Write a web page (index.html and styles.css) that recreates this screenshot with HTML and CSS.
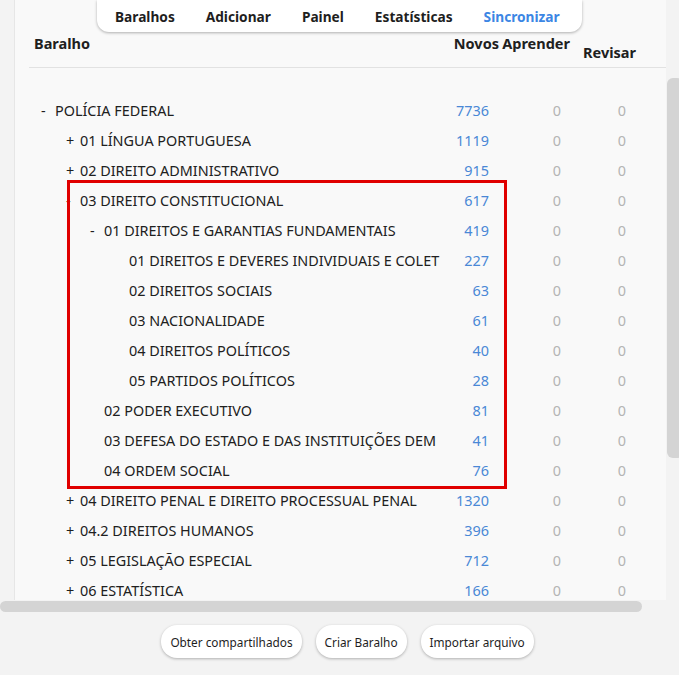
FILE: index.html
```html
<!doctype html>
<html lang="pt-BR">
  <head>
    <meta charset="UTF-8" />
    <meta name="viewport" content="width=device-width, initial-scale=1" />
    <link rel="stylesheet" href="styles.css">
  </head>
  <body class="l-page">
    <nav class="top-nav">
      <a class="top-nav__item">Baralhos</a>
      <a class="top-nav__item">Adicionar</a>
      <a class="top-nav__item">Painel</a>
      <a class="top-nav__item">Estatísticas</a>
      <a class="top-nav__item top-nav__item--sync">Sincronizar</a>
    </nav>

    <main class="deck-panel">
      <div class="deck-head">
        <div class="deck-head__name">Baralho</div>
        <div class="deck-head__col deck-head__col--new">Novos</div>
        <div class="deck-head__col deck-head__col--learn">Aprender</div>
        <div class="deck-head__col deck-head__col--due"><div class="deck-head__wrap">Para Revisar</div></div>
      </div>

      <div class="deck-list">
        <div class="deck-row">
          <div class="deck-row__name lvl-0"><span class="toggle">-</span>POLÍCIA FEDERAL</div>
          <div class="deck-row__new">7736</div><div class="deck-row__zero">0</div><div class="deck-row__zero deck-row__zero--due">0</div>
        </div>
        <div class="deck-row">
          <div class="deck-row__name lvl-1"><span class="toggle">+</span>01 LÍNGUA PORTUGUESA</div>
          <div class="deck-row__new">1119</div><div class="deck-row__zero">0</div><div class="deck-row__zero deck-row__zero--due">0</div>
        </div>
        <div class="deck-row">
          <div class="deck-row__name lvl-1"><span class="toggle">+</span>02 DIREITO ADMINISTRATIVO</div>
          <div class="deck-row__new">915</div><div class="deck-row__zero">0</div><div class="deck-row__zero deck-row__zero--due">0</div>
        </div>

        <div class="deck-group deck-group--marked">
          <div class="deck-row">
            <div class="deck-row__name lvl-1"><span class="toggle">-</span>03 DIREITO CONSTITUCIONAL</div>
            <div class="deck-row__new">617</div><div class="deck-row__zero">0</div><div class="deck-row__zero deck-row__zero--due">0</div>
          </div>
          <div class="deck-row">
            <div class="deck-row__name lvl-2"><span class="toggle">-</span>01 DIREITOS E GARANTIAS FUNDAMENTAIS</div>
            <div class="deck-row__new">419</div><div class="deck-row__zero">0</div><div class="deck-row__zero deck-row__zero--due">0</div>
          </div>
          <div class="deck-row">
            <div class="deck-row__name lvl-3"><span class="toggle"></span>01 DIREITOS E DEVERES INDIVIDUAIS E COLET</div>
            <div class="deck-row__new">227</div><div class="deck-row__zero">0</div><div class="deck-row__zero deck-row__zero--due">0</div>
          </div>
          <div class="deck-row">
            <div class="deck-row__name lvl-3"><span class="toggle"></span>02 DIREITOS SOCIAIS</div>
            <div class="deck-row__new">63</div><div class="deck-row__zero">0</div><div class="deck-row__zero deck-row__zero--due">0</div>
          </div>
          <div class="deck-row">
            <div class="deck-row__name lvl-3"><span class="toggle"></span>03 NACIONALIDADE</div>
            <div class="deck-row__new">61</div><div class="deck-row__zero">0</div><div class="deck-row__zero deck-row__zero--due">0</div>
          </div>
          <div class="deck-row">
            <div class="deck-row__name lvl-3"><span class="toggle"></span>04 DIREITOS POLÍTICOS</div>
            <div class="deck-row__new">40</div><div class="deck-row__zero">0</div><div class="deck-row__zero deck-row__zero--due">0</div>
          </div>
          <div class="deck-row">
            <div class="deck-row__name lvl-3"><span class="toggle"></span>05 PARTIDOS POLÍTICOS</div>
            <div class="deck-row__new">28</div><div class="deck-row__zero">0</div><div class="deck-row__zero deck-row__zero--due">0</div>
          </div>
          <div class="deck-row">
            <div class="deck-row__name lvl-2"><span class="toggle"></span>02 PODER EXECUTIVO</div>
            <div class="deck-row__new">81</div><div class="deck-row__zero">0</div><div class="deck-row__zero deck-row__zero--due">0</div>
          </div>
          <div class="deck-row">
            <div class="deck-row__name lvl-2"><span class="toggle"></span>03 DEFESA DO ESTADO E DAS INSTITUIÇÕES DEM</div>
            <div class="deck-row__new">41</div><div class="deck-row__zero">0</div><div class="deck-row__zero deck-row__zero--due">0</div>
          </div>
          <div class="deck-row">
            <div class="deck-row__name lvl-2"><span class="toggle"></span>04 ORDEM SOCIAL</div>
            <div class="deck-row__new">76</div><div class="deck-row__zero">0</div><div class="deck-row__zero deck-row__zero--due">0</div>
          </div>
        </div>

        <div class="deck-row">
          <div class="deck-row__name lvl-1"><span class="toggle">+</span>04 DIREITO PENAL E DIREITO PROCESSUAL PENAL</div>
          <div class="deck-row__new">1320</div><div class="deck-row__zero">0</div><div class="deck-row__zero deck-row__zero--due">0</div>
        </div>
        <div class="deck-row">
          <div class="deck-row__name lvl-1"><span class="toggle">+</span>04.2 DIREITOS HUMANOS</div>
          <div class="deck-row__new">396</div><div class="deck-row__zero">0</div><div class="deck-row__zero deck-row__zero--due">0</div>
        </div>
        <div class="deck-row">
          <div class="deck-row__name lvl-1"><span class="toggle">+</span>05 LEGISLAÇÃO ESPECIAL</div>
          <div class="deck-row__new">712</div><div class="deck-row__zero">0</div><div class="deck-row__zero deck-row__zero--due">0</div>
        </div>
        <div class="deck-row">
          <div class="deck-row__name lvl-1"><span class="toggle">+</span>06 ESTATÍSTICA</div>
          <div class="deck-row__new">166</div><div class="deck-row__zero">0</div><div class="deck-row__zero deck-row__zero--due">0</div>
        </div>
      </div>
    </main>

    <div class="scroll-thumb scroll-thumb--x"></div>
    <div class="scroll-thumb scroll-thumb--y"></div>

    <footer class="actions">
      <button class="pill-btn">Obter compartilhados</button>
      <button class="pill-btn">Criar Baralho</button>
      <button class="pill-btn">Importar arquivo</button>
    </footer>
  </body>
</html>
```

FILE: styles.css
```css
:root {
  --bg-page: #f3f3f3;
  --bg-card: #f9f9f9;
  --text: #202020;
  --blue: #4a88d6;
  --muted: #b4b4b4;
  --font: "Noto Sans", "Open Sans", sans-serif;
}

html, body {
  margin: 0;
  height: 100%;
}

.l-page {
  position: relative;
  background-color: var(--bg-page);
  color: var(--text);
  font-family: var(--font);
  overflow: hidden;
}

/* top navigation, floats over the list */
.top-nav {
  position: absolute;
  top: 0;
  left: 97px;
  z-index: 5;
  display: flex;
  gap: 31px;
  box-sizing: border-box;
  width: 485px;
  height: 32px;
  padding: 0 18px;
  align-items: center;
  background-color: #fff;
  border-radius: 0 0 12px 12px;
  box-shadow: 0 1px 3px rgba(0, 0, 0, 0.3);
}

.top-nav__item {
  font-size: 13.7px;
  font-weight: 700;
  color: #1e1e1e;
  white-space: nowrap;
}

.top-nav__item--sync {
  color: #3b86e4;
}

/* deck list card */
.deck-panel {
  box-sizing: border-box;
  margin-left: 14px;
  width: 652px;
  height: 600px;
  padding: 33px 0 0 14px;
  background-color: var(--bg-card);
  border-left: 1px solid #e6e6e6;
  overflow: hidden;
}

.deck-head {
  display: grid;
  grid-template-columns: 412px 60px 72px 68px;
  align-items: start;
  padding-bottom: 4px;
  border-bottom: 1px solid #e2e2e2;
  font-size: 14.5px;
  font-weight: 700;
}

.deck-head__name {
  padding-left: 5px;
}

.deck-head__col {
  text-align: right;
}

.deck-head__col--new {
  padding-right: 2px;
}

.deck-head__col--learn {
  padding-right: 3px;
}

/* column is scrolled so only the second line of the label shows */
.deck-head__col--due {
  height: 27px;
  margin-top: 3px;
  padding-right: 5px;
  overflow: hidden;
}

.deck-head__wrap {
  margin-top: -17px;
  line-height: 22px;
}

.deck-list {
  margin-top: 27px;
}

.deck-row {
  display: grid;
  grid-template-columns: 412px 60px 72px 68px;
  align-items: center;
  height: 30px;
  font-size: 14.4px;
}

.deck-row__name {
  padding-left: 11px;
  white-space: nowrap;
  overflow: hidden;
  margin-right: 1px;
}

.lvl-1 { padding-left: 36px; }
.lvl-2 { padding-left: 60px; }
.lvl-3 { padding-left: 85px; }

.toggle {
  display: inline-block;
  width: 14px;
  padding-left: 1px;
}

.deck-row__new {
  text-align: right;
  padding-right: 12px;
  color: var(--blue);
}

.deck-row__zero {
  text-align: right;
  padding-right: 12px;
  color: var(--muted);
}

.deck-row__zero--due {
  padding-right: 15px;
}

/* red annotation box around the constitutional subtree */
.deck-group--marked {
  position: relative;
}

.deck-group--marked::after {
  content: "";
  position: absolute;
  top: -5px;
  bottom: -4px;
  left: 38px;
  width: 434px;
  border: 3px solid #e00000;
  pointer-events: none;
}

/* overlay scrollbars */
.scroll-thumb {
  position: absolute;
  background-color: #d4d4d4;
  border-radius: 6px;
}

.scroll-thumb--x {
  top: 601px;
  left: 0;
  width: 642px;
  height: 11px;
}

.scroll-thumb--y {
  top: 78px;
  left: 667px;
  width: 16px;
  height: 380px;
}

.actions {
  display: flex;
  justify-content: center;
  gap: 14px;
  margin-top: 25px;
  padding-left: 16px;
}

.pill-btn {
  height: 33px;
  padding: 0 9px;
  font-family: var(--font);
  font-size: 11.8px;
  color: #1e1e1e;
  background-color: #fff;
  border: none;
  border-radius: 16px;
  box-shadow: 0 1px 3px rgba(0, 0, 0, 0.28);
}
```
